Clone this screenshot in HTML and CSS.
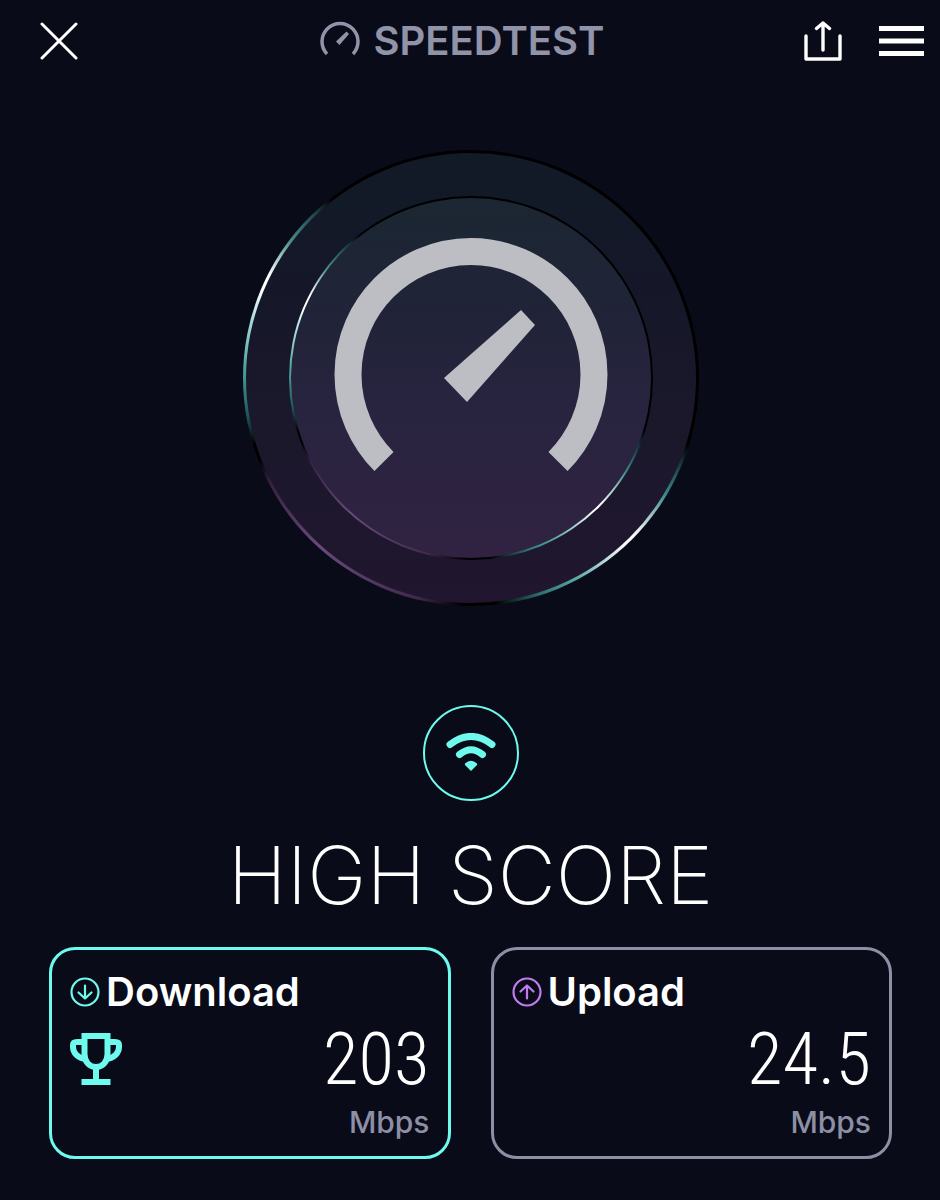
FILE: index.html
```html
<!DOCTYPE html>
<html lang="en">
<head>
  <meta charset="UTF-8" />
  <meta name="viewport" content="width=device-width, initial-scale=1.0"/>
  <title>Speedtest</title>
  <link rel="stylesheet" href="styles.css">
</head>
<body>
  <header>
    <button type="button" class="icon-btn close" aria-label="Close">
      <svg width="38" height="38" viewBox="0 0 38 38">
        <path d="M2 2L36 36M36 2L2 36" fill="none" stroke="#fff" stroke-width="3" stroke-linecap="round"/>
      </svg>
    </button>

    <div class="logo">
      <svg width="40" height="40" viewBox="0 0 40 40">
        <path d="M7 33A18 18 0 1 1 33 33" fill="none" stroke="#9193a8" stroke-width="3.500"/>
        <path d="M26.500 10.500L29 13L19.500 24L16 20.500Z" fill="#9193a8"/>
      </svg>
      <span>SPEEDTEST</span>
    </div>

    <div class="actions">
      <button type="button" class="icon-btn" aria-label="Share">
        <svg width="38" height="40" viewBox="0 0 38 40">
          <path d="M2 15V38H36V15M19 29V2M12.500 7.500L19 2L25.500 7.500" fill="none" stroke="#fff" stroke-width="3.400" stroke-linecap="round" stroke-linejoin="round"/>
        </svg>
      </button>
      <button type="button" class="icon-btn" aria-label="Menu">
        <svg width="45" height="30" viewBox="0 0 45 30">
          <path d="M0 2.500H45M0 15H45M0 27.500H45" stroke="#fff" stroke-width="5"/>
        </svg>
      </button>
    </div>
  </header>

  <main>
    <div class="ring ring-outer">
      <div class="ring ring-inner">
        <svg class="gauge" width="276" height="234" viewBox="0 0 276 234">
          <path d="M51 223.500A123 123 0 1 1 225 223.500" fill="none" stroke="#bdbdc4" stroke-width="27"/>
          <path d="M188 72L202 87L134 164L111 140Z" fill="#bdbdc4"/>
        </svg>
      </div>
    </div>

    <div class="wifi">
      <svg width="50" height="40" viewBox="0 0 50 40">
        <g fill="none" stroke="#6efbee" stroke-width="7" stroke-linecap="round">
          <path d="M4 11.500Q25 -4.500 46 11.500"/>
          <path d="M13.500 21.500Q25 12 36.500 21.500"/>
        </g>
        <path d="M19 30.500Q25 25 31 30.500Q31.500 31.500 30.500 32.500L25 38L19.500 32.500Q18.500 31.500 19 30.500Z" fill="#6efbee"/>
      </svg>
    </div>

    <h1>HIGH SCORE</h1>

    <div class="results">
      <section class="card best">
        <h2>
          <svg width="30" height="30" viewBox="0 0 30 30" fill="none" stroke="#6efbee" stroke-width="2.200" stroke-linecap="round" stroke-linejoin="round">
            <circle cx="15" cy="15" r="13.500"/>
            <path d="M15 8.500V21.500M8.500 15.500L15 21.500L21.500 15.500"/>
          </svg>
          Download
        </h2>
        <div class="score">
          <svg width="52" height="52" viewBox="0 0 52 52" fill="none" stroke="#6efbee" stroke-width="6">
            <path d="M14.500 3H37.500V21C37.500 29 32.500 34 26 34S14.500 29 14.500 21Z"/>
            <path d="M14 9H7C4 9 3 10 3 12V14C3 20 8 25 15 26M38 9H45C48 9 49 10 49 12V14C49 20 44 25 37 26M26 34V49M11.500 49H40.500"/>
          </svg>
          <span class="value">203</span>
        </div>
        <p>Mbps</p>
      </section>

      <section class="card">
        <h2>
          <svg width="30" height="30" viewBox="0 0 30 30" fill="none" stroke="#c07cf0" stroke-width="2.200" stroke-linecap="round" stroke-linejoin="round">
            <circle cx="15" cy="15" r="13.500"/>
            <path d="M15 21.500V8.500M8.500 14.500L15 8.500L21.500 14.500"/>
          </svg>
          Upload
        </h2>
        <div class="score">
          <span class="value">24.5</span>
        </div>
        <p>Mbps</p>
      </section>
    </div>
  </main>
</body>
</html>
```
FILE: styles.css
```css
* {
  box-sizing: border-box;
}

body {
  margin: 0;
  background-color: #090b19;
  color: #fff;
  font-family: Inter, 'Liberation Sans', sans-serif;
}

svg {
  display: block;
  flex-shrink: 0;
}

header {
  display: grid;
  grid-template-columns: 1fr auto 1fr;
  align-items: center;
  padding: 17px 16px 17px 0;
}

.icon-btn {
  padding: 0;
  border: none;
  background: none;
  cursor: pointer;
}

.close {
  justify-self: start;
  margin-left: 40px;
}

.logo {
  display: flex;
  align-items: center;
  gap: 14px;
  color: #9193a8;
  font-size: 40px;
  font-weight: 600;
  line-height: 48px;
}

.actions {
  display: flex;
  align-items: center;
  justify-content: flex-end;
  gap: 37px;
}

main {
  display: flex;
  flex-direction: column;
  align-items: center;
  padding: 68px 48px 40px 49px;
}

/* Speed rings: disc fill plus a lit rim */
.ring {
  display: flex;
  align-items: center;
  justify-content: center;
  border: 2px solid transparent;
  border-radius: 50%;
  --rim: conic-gradient(
    #000 0deg, #000 107deg, #1b3f47 113deg, #3d8a88 121deg,
    #fff 134deg, #fff 137deg, #5aaba8 152deg, #2f716f 162deg,
    #000 174deg, #000 182deg, #3f2a4e 194deg, #6a4a7d 222deg,
    #33203f 243deg, #000 249deg, #000 253deg, #1d5557 260deg,
    #4a9f9a 272deg, #a9dcdc 285deg, #fff 293deg, #fff 297deg,
    #4a908c 307deg, #1b3f47 317deg, #000 322deg, #000 360deg
  );
}

.ring-outer {
  width: 456px;
  height: 456px;
  border-width: 3px;
  background:
    linear-gradient(#111b26, #151729 30%, #1b182b 60%, #20162f) padding-box,
    var(--rim) border-box;
}

.ring-inner {
  width: 364px;
  height: 364px;
  background:
    linear-gradient(#1b2732, #212338 35%, #282440 60%, #312242) padding-box,
    var(--rim) border-box;
}

.gauge {
  margin-bottom: 46px;
}

.wifi {
  display: flex;
  align-items: center;
  justify-content: center;
  width: 96px;
  height: 96px;
  margin-top: 99px;
  border: 2px solid #6efbee;
  border-radius: 50%;
}

h1 {
  margin: 26px 0 24px;
  font-size: 80px;
  font-weight: 200;
  line-height: 96px;
}

.results {
  display: grid;
  grid-template-columns: 1fr 1fr;
  gap: 40px;
  width: 100%;
}

.card {
  padding: 18px 18px 14px;
  border: 3px solid #8d8fa5;
  border-radius: 26px;
}

.best {
  border-color: #6efbee;
}

.card h2 {
  display: flex;
  align-items: center;
  gap: 6px;
  margin: 0;
  font-size: 40px;
  font-weight: 600;
  line-height: 48px;
}

.score {
  display: flex;
  align-items: center;
  height: 86px;
}

.value {
  margin-left: auto;
  font-family: 'Roboto Condensed', 'Liberation Sans Narrow', Roboto, sans-serif;
  font-size: 73px;
  font-weight: 300;
  line-height: 84px;
}

.card p {
  margin: 0;
  color: #8d8fa5;
  font-size: 30px;
  font-weight: 500;
  line-height: 40px;
  text-align: right;
}
```
